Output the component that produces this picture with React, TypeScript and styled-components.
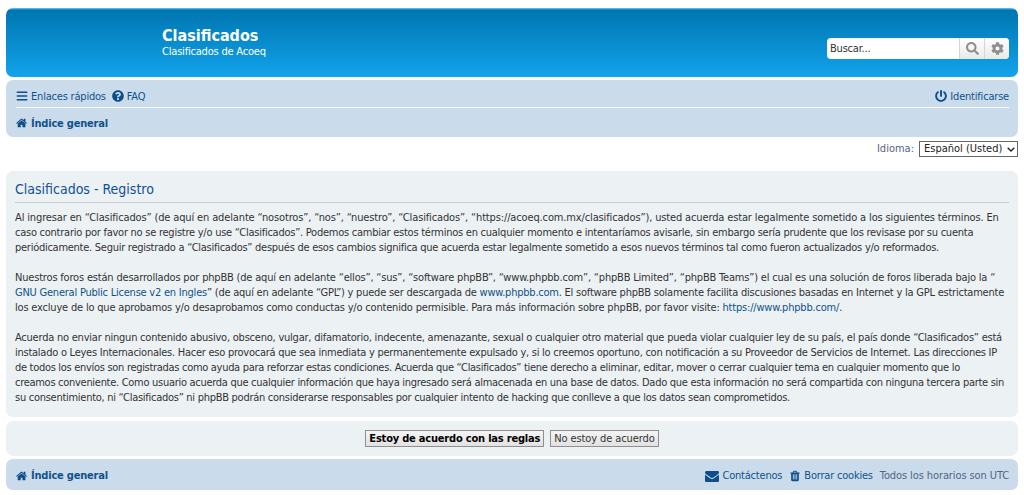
import styled, { createGlobalStyle } from 'styled-components'
import { FaBars, FaCog, FaPowerOff, FaQuestionCircle, FaSearch } from 'react-icons/fa'

const HOME_PATH =
  'M1408 992v480q0 26-19 45t-45 19h-384v-384h-256v384h-384q-26 0-45-19t-19-45v-480q0-1 .5-3t.5-3l575-474 575 474q1 2 1 6zm223-69l-62 74q-8 9-21 11h-3q-13 0-21-7l-692-577-692 577q-12 8-24 7-13-2-21-11l-62-74q-8-10-7-23.500t11-21.500l719-599q32-26 76-26t76 26l244 204v-195q0-14 9-23t23-9h192q14 0 23 9t9 23v408l219 182q10 8 11 21.500t-7 23.500z'
const ENVELOPE_PATH =
  'M1792 710v794q0 66-47 113t-113 47h-1472q-66 0-113-47t-47-113v-794q44 49 101 87 362 246 497 345 57 42 92.500 65.500t94.500 48 110 24.500h2q51 0 110-24.500t94.500-48 92.500-65.500q170-123 498-345 57-39 100-87zm0-294q0 79-49 151t-122 123q-376 261-468 325-10 7-42.500 30.500t-54 38-52 32.500-57.500 27-50 9h-2q-23 0-50-9t-57.500-27-52-32.500-54-38-42.500-30.500q-91-64-262-182.500t-205-142.500q-62-42-117-115.500t-55-136.500q0-78 41.500-130t118.500-52h1472q65 0 112.500 47t47.500 113z'
const TRASH_PATH =
  'M704 1376v-704q0-14-9-23t-23-9h-64q-14 0-23 9t-9 23v704q0 14 9 23t23 9h64q14 0 23-9t9-23zm256 0v-704q0-14-9-23t-23-9h-64q-14 0-23 9t-9 23v704q0 14 9 23t23 9h64q14 0 23-9t9-23zm256 0v-704q0-14-9-23t-23-9h-64q-14 0-23 9t-9 23v704q0 14 9 23t23 9h64q14 0 23-9t9-23zm-544-992h448l-48-117q-7-9-17-11h-317q-10 2-17 11zm928 32v64q0 14-9 23t-23 9h-96v948q0 83-47 143.500t-113 60.500h-832q-66 0-113-58.500t-47-141.500v-952h-96q-14 0-23-9t-9-23v-64q0-14 9-23t23-9h309l70-167q15-37 54-63t79-26h320q40 0 79 26t54 63l70 167h309q14 0 23 9t9 23z'

const GlobalStyle = createGlobalStyle`
  html, body {
    margin: 0;
    padding: 0;
    background: #fff;
  }
  body {
    font-family: "DejaVu Sans Condensed", "DejaVu Sans", Verdana, sans-serif;
    font-stretch: condensed;
    font-size: 11px;
    color: #536482;
  }
  * {
    box-sizing: border-box;
  }
`

const Wrap = styled.div`
  width: 1024px;
  height: 495px;
  padding: 8px 6px 0;
  overflow: hidden;
`

const HeaderBar = styled.header`
  height: 69px;
  border-radius: 7px;
  background: linear-gradient(to bottom, #6aceff 0, #0076b1 2px, #12a3eb 100%);
  display: flex;
  align-items: flex-start;
  justify-content: space-between;
  padding: 18px 9px 0 156px;
  color: #fff;
`

const SiteTitle = styled.div`
  font-size: 16px;
  font-weight: bold;
  line-height: 19px;
`

const SiteDesc = styled.div`
  font-size: 11px;
  line-height: 13px;
  letter-spacing: -0.2px;
`

const SearchBox = styled.div`
  display: flex;
  width: 182px;
  height: 21px;
  margin-top: 12px;
  background: #fff;
  border-radius: 4px;
  overflow: hidden;
`

const SearchInput = styled.div`
  flex: 1;
  padding-left: 3px;
  font-size: 11px;
  line-height: 21px;
  letter-spacing: -0.2px;
  color: #333;
`

const SearchButton = styled.div`
  width: 25px;
  display: flex;
  align-items: center;
  justify-content: center;
  background: linear-gradient(to bottom, #fff, #e9e9e9);
  border-left: 1px solid #d5d5d5;
  color: #8f8f8f;
  font-size: 13px;
`

const NavBar = styled.nav`
  height: 57px;
  margin-top: 3px;
  padding: 0 9px 0 10px;
  border-radius: 7px;
  background: #cadceb;
`

const NavRow = styled.div<{ $divided?: boolean }>`
  height: 28px;
  display: flex;
  align-items: center;
  justify-content: space-between;
  padding-top: ${({ $divided }) => ($divided ? '5px' : '2px')};
  border-bottom: ${({ $divided }) => ($divided ? '1px solid #fff' : 'none')};
`

const LinkGroup = styled.div<{ $gap?: number }>`
  display: flex;
  align-items: center;
  gap: ${({ $gap }) => $gap ?? 6}px;
`

const NavLink = styled.span<{ $bold?: boolean }>`
  display: inline-flex;
  align-items: center;
  gap: 3px;
  color: #105289;
  font-weight: ${({ $bold }) => ($bold ? 'bold' : 'normal')};
  letter-spacing: -0.2px;
  white-space: nowrap;

  svg {
    color: #0f4d8a;
    font-size: 12px;
  }
`

const FontIcon = styled.svg<{ $size?: number }>`
  width: ${({ $size }) => $size ?? 12}px;
  height: ${({ $size }) => $size ?? 12}px;
  fill: currentColor;
`

const LangRow = styled.div`
  height: 34px;
  display: flex;
  justify-content: flex-end;
  align-items: flex-start;
  gap: 5px;
  padding-top: 4px;
  color: #536482;
  line-height: 16px;
`

const LangSelect = styled.div`
  width: 99px;
  height: 16px;
  border: 1px solid #666;
  padding-left: 4px;
  color: #222;
  line-height: 14px;
  display: flex;
  align-items: center;
  justify-content: space-between;
  white-space: nowrap;

  svg {
    margin-right: 2px;
  }
`

const Panel = styled.section`
  height: 246px;
  padding: 7px 9px 0;
  border-radius: 7px;
  background: #ecf1f3;
`

const PanelTitle = styled.h2`
  margin: 0 0 7px;
  padding: 2px 0 3px;
  border-bottom: 1px solid #ccc;
  font-size: 14px;
  font-weight: normal;
  line-height: 19px;
  color: #115098;
`

const Terms = styled.div`
  font-size: 11px;
  line-height: 15px;
  color: #333;
`

const Paragraph = styled.p`
  margin: 0 0 15px;
`

const TermLine = styled.span<{ $tracking: number }>`
  display: block;
  white-space: nowrap;
  height: 15px;
  letter-spacing: ${({ $tracking }) => $tracking}px;
`

const TermLink = styled.span`
  color: #105289;
`

const ActionPanel = styled.div`
  height: 35px;
  margin-top: 4px;
  border-radius: 7px;
  background: #ecf1f3;
  display: flex;
  align-items: center;
  justify-content: center;
  gap: 6px;
`

const ActionButton = styled.div<{ $primary?: boolean }>`
  height: 17px;
  padding: 0 3px;
  border: 1px solid #8f8f8f;
  background: linear-gradient(to bottom, #f4f4f4, #e2e2e2);
  color: ${({ $primary }) => ($primary ? '#000' : '#333')};
  font-weight: ${({ $primary }) => ($primary ? 'bold' : 'normal')};
  letter-spacing: ${({ $primary }) => ($primary ? '-0.2px' : '-0.1px')};
  line-height: 15px;
  white-space: nowrap;
`

const FooterBar = styled.footer`
  height: 31px;
  margin-top: 3px;
  padding: 2px 9px 0 10px;
  border-radius: 7px;
  background: #cadceb;
  display: flex;
  align-items: center;
  justify-content: space-between;
`

const FooterNote = styled.span`
  color: #536482;
  letter-spacing: -0.1px;
  white-space: nowrap;
`

const terms: { tracking: number; text: React.ReactNode }[][] = [
  [
    {
      tracking: -0.14,
      text: 'Al ingresar en “Clasificados” (de aquí en adelante “nosotros”, “nos”, “nuestro”, “Clasificados”, “https://acoeq.com.mx/clasificados”), usted acuerda estar legalmente sometido a los siguientes términos. En',
    },
    {
      tracking: -0.25,
      text: 'caso contrario por favor no se registre y/o use “Clasificados”. Podemos cambiar estos términos en cualquier momento e intentaríamos avisarle, sin embargo sería prudente que los revisase por su cuenta',
    },
    {
      tracking: -0.265,
      text: 'periódicamente. Seguir registrado a “Clasificados” después de esos cambios significa que acuerda estar legalmente sometido a esos nuevos términos tal como fueron actualizados y/o reformados.',
    },
  ],
  [
    {
      tracking: -0.186,
      text: 'Nuestros foros están desarrollados por phpBB (de aquí en adelante “ellos”, “sus”, “software phpBB”, “www.phpbb.com”, “phpBB Limited”, “phpBB Teams”) el cual es una solución de foros liberada bajo la “',
    },
    {
      tracking: -0.226,
      text: (
        <>
          <TermLink>GNU General Public License v2 en Ingles</TermLink>” (de aquí en adelante “GPL”) y puede ser descargada de <TermLink>www.phpbb.com</TermLink>. El software phpBB solamente facilita discusiones basadas en Internet y la GPL estrictamente
        </>
      ),
    },
    {
      tracking: -0.19,
      text: (
        <>
          los excluye de lo que aprobamos y/o desaprobamos como conductas y/o contenido permisible. Para más información sobre phpBB, por favor visite: <TermLink>https://www.phpbb.com/</TermLink>.
        </>
      ),
    },
  ],
  [
    {
      tracking: -0.225,
      text: 'Acuerda no enviar ningun contenido abusivo, obsceno, vulgar, difamatorio, indecente, amenazante, sexual o cualquier otro material que pueda violar cualquier ley de su país, el país donde “Clasificados” está',
    },
    {
      tracking: -0.25,
      text: 'instalado o Leyes Internacionales. Hacer eso provocará que sea inmediata y permanentemente expulsado y, si lo creemos oportuno, con notificación a su Proveedor de Servicios de Internet. Las direcciones IP',
    },
    {
      tracking: -0.302,
      text: 'de todos los envíos son registradas como ayuda para reforzar estas condiciones. Acuerda que “Clasificados” tiene derecho a eliminar, editar, mover o cerrar cualquier tema en cualquier momento que lo',
    },
    {
      tracking: -0.288,
      text: 'creamos conveniente. Como usuario acuerda que cualquier información que haya ingresado será almacenada en una base de datos. Dado que esta información no será compartida con ninguna tercera parte sin',
    },
    {
      tracking: -0.274,
      text: 'su consentimiento, ni “Clasificados” ni phpBB podrán considerarse responsables por cualquier intento de hacking que conlleve a que los datos sean comprometidos.',
    },
  ],
]

const HomeIcon = () => (
  <FontIcon viewBox="0 0 1792 1792">
    <path d={HOME_PATH} />
  </FontIcon>
)

const App = () => (
  <Wrap>
    <GlobalStyle />
    <HeaderBar>
      <div>
        <SiteTitle>Clasificados</SiteTitle>
        <SiteDesc>Clasificados de Acoeq</SiteDesc>
      </div>
      <SearchBox>
        <SearchInput>Buscar...</SearchInput>
        <SearchButton><FaSearch /></SearchButton>
        <SearchButton><FaCog /></SearchButton>
      </SearchBox>
    </HeaderBar>

    <NavBar>
      <NavRow $divided>
        <LinkGroup>
          <NavLink><FaBars />Enlaces rápidos</NavLink>
          <NavLink><FaQuestionCircle />FAQ</NavLink>
        </LinkGroup>
        <NavLink><FaPowerOff />Identificarse</NavLink>
      </NavRow>
      <NavRow>
        <NavLink $bold><HomeIcon />Índice general</NavLink>
      </NavRow>
    </NavBar>

    <LangRow>
      Idioma:
      <LangSelect>
        Español (Usted)
        <svg width="8" height="5" viewBox="0 0 8 5">
          <path d="M0.7 0.7 L4 4 L7.3 0.7" fill="none" stroke="#222" strokeWidth="1.4" />
        </svg>
      </LangSelect>
    </LangRow>

    <Panel>
      <PanelTitle>Clasificados - Registro</PanelTitle>
      <Terms>
        {terms.map((block, i) => (
          <Paragraph key={i}>
            {block.map((line, j) => (
              <TermLine key={j} $tracking={line.tracking}>{line.text}</TermLine>
            ))}
          </Paragraph>
        ))}
      </Terms>
    </Panel>

    <ActionPanel>
      <ActionButton $primary>Estoy de acuerdo con las reglas</ActionButton>
      <ActionButton>No estoy de acuerdo</ActionButton>
    </ActionPanel>

    <FooterBar>
      <NavLink $bold><HomeIcon />Índice general</NavLink>
      <LinkGroup $gap={7}>
        <NavLink>
          <FontIcon $size={14} viewBox="0 0 1792 1792"><path d={ENVELOPE_PATH} /></FontIcon>
          Contáctenos
        </NavLink>
        <NavLink>
          <FontIcon viewBox="0 0 1792 1792"><path d={TRASH_PATH} /></FontIcon>
          Borrar cookies
        </NavLink>
        <FooterNote>Todos los horarios son UTC</FooterNote>
      </LinkGroup>
    </FooterBar>
  </Wrap>
)

export default App
